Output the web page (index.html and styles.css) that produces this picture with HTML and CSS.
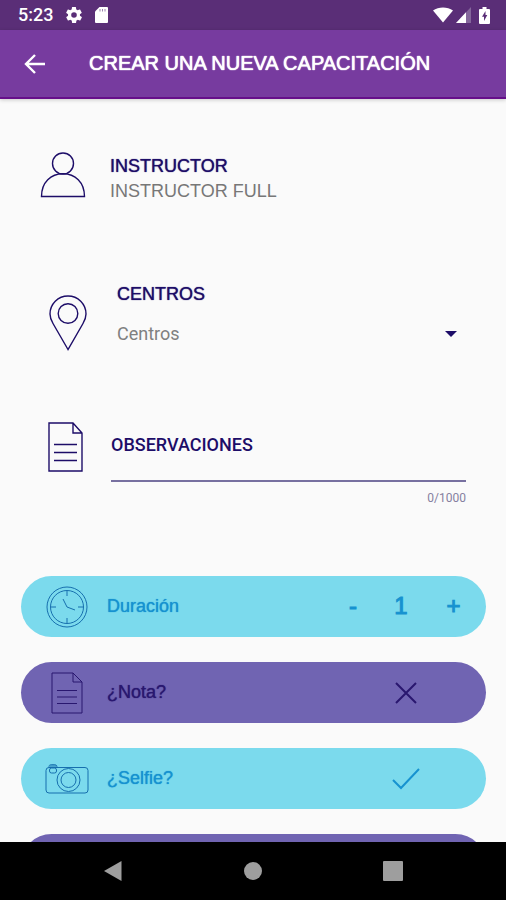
FILE: index.html
```html
<!DOCTYPE html>
<html lang="es">
<head>
<meta charset="utf-8">
<meta name="viewport" content="width=device-width, initial-scale=1">
<title>Crear una nueva capacitación</title>
<link rel="stylesheet" href="styles.css">
</head>
<body>
<div class="status">
  <span class="clock">5:23</span>
  <svg width="16" height="16" viewBox="2 2 20 20" fill="#fff"><path d="M19.4 13a7.500 7.500 0 0 0 0-2l2.100-1.650a.5.5 0 0 0 .1-.6l-2-3.500a.5.5 0 0 0-.6-.2l-2.500 1a7 7 0 0 0-1.700-1l-.4-2.650A.5.5 0 0 0 14 2h-4a.5.5 0 0 0-.5.4l-.4 2.650a7 7 0 0 0-1.700 1l-2.500-1a.5.5 0 0 0-.6.2l-2 3.500a.5.5 0 0 0 .1.600L4.600 11a7.500 7.500 0 0 0 0 2l-2.100 1.650a.5.5 0 0 0-.1.600l2 3.500c.1.200.4.300.6.200l2.500-1a7 7 0 0 0 1.700 1l.4 2.650c0 .2.200.4.500.4h4c.2 0 .5-.2.500-.4l.4-2.650a7 7 0 0 0 1.700-1l2.500 1c.2.100.5 0 .6-.2l2-3.500a.5.5 0 0 0-.1-.6zM12 15.500a3.500 3.500 0 1 1 0-7 3.500 3.500 0 0 1 0 7z"/></svg>
  <svg class="card-icon" width="13" height="16" viewBox="0 0 13 16"><path d="M4.500 0H12a1 1 0 0 1 1 1v14a1 1 0 0 1-1 1H1a1 1 0 0 1-1-1V4.500z" fill="#fff"/><path d="M5 2v2.500M7.500 2v2.500M10 2v2.500" stroke="#9a82ad"/></svg>
  <span class="spacer"></span>
  <svg width="20" height="16" viewBox="0 0 20 16" fill="#fff"><path d="M10 15.500 0 3.500C5.500-.6 14.500-.6 20 3.500z"/></svg>
  <svg width="15" height="16" viewBox="0 0 15 16"><path d="M15 0v16H0z" fill="#84669b"/><path d="M10 5.300V16H0z" fill="#fff"/></svg>
  <svg class="battery" width="11" height="17" viewBox="0 0 11 17"><path d="M3.500 0h4v2H10a1 1 0 0 1 1 1v13a1 1 0 0 1-1 1H1a1 1 0 0 1-1-1V3a1 1 0 0 1 1-1h2.500z" fill="#fff"/><path d="M6.500 4 3 9.800h2V14l3.300-6H6.500z" fill="#5a2e77"/></svg>
</div>
<header class="bar">
  <button class="back" type="button" aria-label="Volver"><svg width="22" height="20" viewBox="0 0 22 20" fill="none" stroke="#fff" stroke-width="2.400"><path d="M21 10H2.500M11 1 2 10l9 9"/></svg></button>
  <h1 class="title">CREAR UNA NUEVA CAPACITACIÓN</h1>
</header>
<main class="content">
  <section class="row instructor">
    <svg class="line-icon" width="46" height="46" viewBox="0 0 46 46"><circle cx="23" cy="11.500" r="10.500"/><path d="M1.500 44.500C1.500 30 11 21.700 23 21.700S44.500 30 44.500 44.500z"/></svg>
    <div class="person">
      <h2 class="heading">INSTRUCTOR</h2>
      <p class="name">INSTRUCTOR FULL</p>
    </div>
  </section>
  <section class="row centros">
    <svg class="line-icon" width="38" height="56" viewBox="0 0 38 56"><path d="M19 54.500 4 28.500C2 25 1 22 1 19a18 18 0 0 1 36 0c0 3-1 6-3 9.500z"/><circle cx="19" cy="18.500" r="9.800"/></svg>
    <div class="field">
      <label class="heading" for="centros">CENTROS</label>
      <div class="select-box">
        <select id="centros" class="select"><option>Centros</option></select>
        <svg class="caret" width="12" height="6" viewBox="0 0 12 6"><path d="M0 0h12L6 6z" fill="#1d0d68"/></svg>
      </div>
    </div>
  </section>
  <section class="row notes">
    <svg class="line-icon" width="36" height="50" viewBox="0 0 36 50"><path d="M1 1h24l9 10v38H1zM25 1v10h9M6 22.500h23M6 30.500h23M6 38.500h23"/></svg>
    <div class="field">
      <label class="notes-label" for="obs">OBSERVACIONES</label>
      <textarea id="obs" class="textarea" rows="1" maxlength="1000"></textarea>
      <span class="counter">0/1000</span>
    </div>
  </section>
  <div class="options">
    <div class="pill cyan">
      <span class="pill-icon"><svg width="42" height="42" viewBox="0 0 42 42"><circle cx="21" cy="21" r="20"/><circle cx="21" cy="21" r="16.500"/><path d="M21 5v5M21 32v5M5 21h5M32 21h5M17 13l4 8 8 3"/></svg></span>
      <span class="pill-label">Duración</span>
      <div class="stepper">
        <button type="button" aria-label="Menos">-</button>
        <output>1</output>
        <button type="button" aria-label="Más">+</button>
      </div>
    </div>
    <label class="pill violet">
      <span class="pill-icon"><svg width="32" height="42" viewBox="0 0 32 42"><path d="M1 1h21l9 9v31H1zM22 1v9h9M6 18.500h20M6 25h20M6 31.500h20"/></svg></span>
      <span class="pill-label">¿Nota?</span>
      <input class="toggle" type="checkbox">
      <span class="mark"><svg class="off" width="22" height="22" viewBox="0 0 22 22"><path d="m1 1 20 20M21 1 1 21"/></svg><svg class="on" width="28" height="22" viewBox="0 0 28 22"><path d="m1 12 8 8L27 1"/></svg></span>
    </label>
    <label class="pill cyan">
      <span class="pill-icon"><svg width="44" height="30" viewBox="0 0 44 30"><rect x="1" y="3.500" width="42" height="25.500" rx="3"/><circle cx="23.500" cy="16" r="11.500"/><circle cx="23.500" cy="16" r="7.500"/><rect x="4.500" y="4" width="7" height="5" rx="2"/><path d="M4 3.500C4 .5 5 .7 8 .7s4 0 4 2.800M5 2h6"/></svg></span>
      <span class="pill-label">¿Selfie?</span>
      <input class="toggle" type="checkbox" checked>
      <span class="mark"><svg class="off" width="22" height="22" viewBox="0 0 22 22"><path d="m1 1 20 20M21 1 1 21"/></svg><svg class="on" width="28" height="22" viewBox="0 0 28 22"><path d="m1 12 8 8L27 1"/></svg></span>
    </label>
    <div class="pill violet"></div>
  </div>
</main>
<nav class="nav">
  <button type="button" aria-label="Atrás"><svg width="20" height="22" viewBox="0 0 20 22"><path d="M18.500 1v20L1 11z"/></svg></button>
  <button type="button" aria-label="Inicio"><svg width="20" height="20" viewBox="0 0 20 20"><circle cx="10" cy="10" r="9"/></svg></button>
  <button type="button" aria-label="Recientes"><svg width="20" height="20" viewBox="0 0 20 20"><rect width="20" height="20" rx="1"/></svg></button>
</nav>
</body>
</html>
```
FILE: styles.css
```css
* { box-sizing: border-box; }

body {
  margin: 0;
  height: 100vh;
  display: flex;
  flex-direction: column;
  background: #fafafa;
  color: #1d0d68;
  font-family: "Liberation Sans", Arial, sans-serif;
  font-size: 18px;
}

h1, h2, p { margin: 0; }

button {
  border: 0;
  padding: 0;
  background: none;
  color: inherit;
  font: inherit;
}

svg { display: block; flex: none; }

.status {
  flex: none;
  height: 30px;
  display: flex;
  align-items: center;
  padding: 0 16px 0 18px;
  background: #5a2e77;
  color: #fff;
}

.clock {
  margin-right: 13px;
  font: 500 18px/30px Roboto, sans-serif;
}

.card-icon { margin-left: 13px; }
.spacer { flex: 1; }
.status .battery { margin-left: 8px; }
.spacer + svg { margin-right: 3px; }

.bar {
  flex: none;
  height: 69px;
  display: flex;
  align-items: center;
  gap: 43px;
  padding: 0 24px;
  background: #773b9f;
  border-bottom: 2px solid #660f8a;
  box-shadow: 0 1px 4px #0003;
  color: #fff;
  z-index: 1;
}

.title {
  font-size: 20px;
  font-weight: 400;
  line-height: 24px;
  padding-bottom: 2px;
  text-shadow: 0 0 1px, 0 0 1px;
}

.content {
  flex: 1;
  min-height: 0;
  overflow-y: auto;
  scrollbar-width: none;
  padding: 53px 20px 25px 21px;
}

.row { display: flex; padding-right: 20px; }
.field { flex: 1; min-width: 0; display: flex; flex-direction: column; }

.line-icon {
  fill: none;
  stroke: #1d0d68;
  stroke-width: 1.4;
}

.instructor { padding-left: 19px; gap: 24px; }
.person { padding-top: 2px; }

.heading {
  font-size: 18px;
  font-weight: 400;
  line-height: 25px;
  text-shadow: 0 0 1px;
}

.name { line-height: 25px; color: #777; }

.centros {
  margin-top: 78px;
  padding-left: 28px;
  gap: 30px;
  align-items: flex-end;
}

.select-box { position: relative; margin-top: 8px; }

.select {
  appearance: none;
  display: block;
  width: 100%;
  height: 36px;
  padding: 0;
  border: 0;
  background: none;
  color: #808080;
  font: 18px Roboto, sans-serif;
}

.caret {
  position: absolute;
  right: 9px;
  top: 16px;
  pointer-events: none;
}

.notes { margin-top: 71px; padding-left: 27px; gap: 27px; }

.notes-label {
  margin-top: 12px;
  font: 500 18px/22px Roboto, sans-serif;
}

.textarea {
  height: 26px;
  padding: 2px 0;
  border: 0;
  border-bottom: 2px solid #7770a0;
  background: none;
  resize: none;
  outline: 0;
  color: inherit;
  font: 16px Roboto, sans-serif;
}

.counter {
  align-self: flex-end;
  margin-top: 8px;
  color: #8580a0;
  font: 12px/16px Roboto, sans-serif;
}

.options { margin-top: 70px; display: grid; gap: 25px; }

.pill {
  position: relative;
  height: 61px;
  display: flex;
  align-items: center;
  padding: 0 16px;
  border-radius: 31px;
}

.cyan { background: #7bdaed; color: #1692d0; }
.violet { background: #7064b2; color: #29176f; }

.pill-icon {
  width: 60px;
  display: flex;
  justify-content: center;
  margin-right: 10px;
  fill: none;
  stroke: currentColor;
}

.cyan .pill-icon { stroke: #166fae; }

.pill-label { flex: 1; text-shadow: 0 0 1px; }

.stepper {
  display: grid;
  grid-template-columns: 32px 64px 41px;
  margin-right: -4px;
  padding-bottom: 2px;
  text-align: center;
  font-size: 24px;
  -webkit-text-stroke: 1px;
}

.toggle {
  position: absolute;
  opacity: 0;
}

.mark {
  width: 32px;
  display: flex;
  justify-content: center;
  margin-right: 48px;
  fill: none;
  stroke: currentColor;
  stroke-width: 2;
}

.on, .toggle:checked + .mark .off { display: none; }
.toggle:checked + .mark .on { display: block; }

.nav {
  flex: none;
  height: 58px;
  display: flex;
  justify-content: center;
  align-items: center;
  gap: 120px;
  background: #000;
  fill: #9e9e9e;
}
```
